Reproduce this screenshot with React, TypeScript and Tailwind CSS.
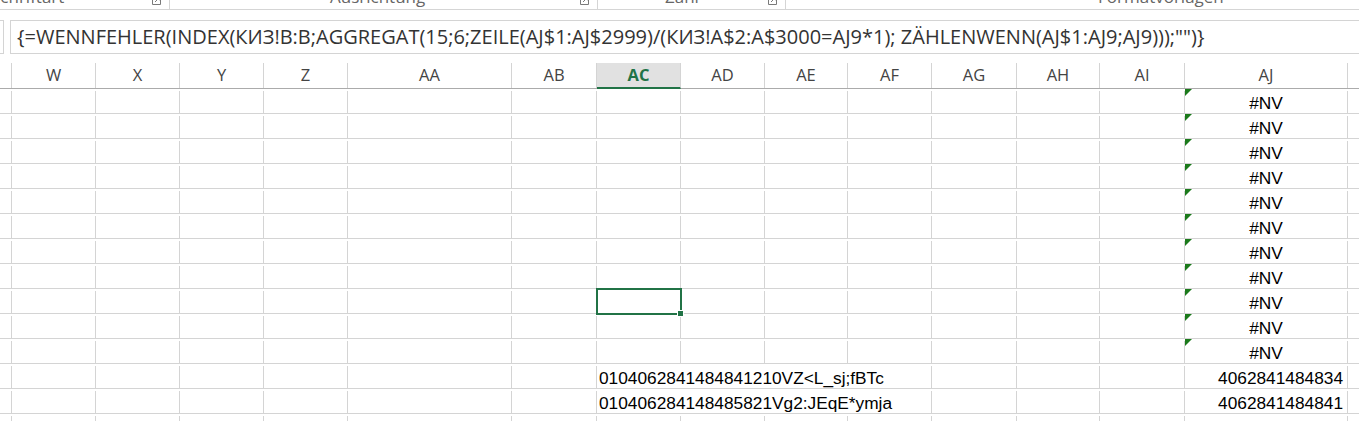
import React from 'react';

const cols = [
  { name: 'W', w: 'w-[84px]' },
  { name: 'X', w: 'w-[84px]' },
  { name: 'Y', w: 'w-[84px]' },
  { name: 'Z', w: 'w-[84px]' },
  { name: 'AA', w: 'w-[164px]' },
  { name: 'AB', w: 'w-[85px]' },
  { name: 'AC', w: 'w-[84px]' },
  { name: 'AD', w: 'w-[84px]' },
  { name: 'AE', w: 'w-[83px]' },
  { name: 'AF', w: 'w-[84px]' },
  { name: 'AG', w: 'w-[85px]' },
  { name: 'AH', w: 'w-[83px]' },
  { name: 'AI', w: 'w-[85px]' },
  { name: 'AJ', w: 'w-[163px]' },
];

const formula =
  '{=WENNFEHLER(INDEX(КИЗ!B:B;AGGREGAT(15;6;ZEILE(AJ$1:AJ$2999)/(КИЗ!A$2:A$3000=AJ9*1); ZÄHLENWENN(AJ$1:AJ9;AJ9)));"")}';

// 11 Zeilen mit #NV, danach 2 Zeilen mit Daten, eine angeschnittene
const rows: { ac?: string; aj?: string; err?: boolean }[] = [
  ...Array.from({ length: 11 }, () => ({ aj: '#NV', err: true })),
  { ac: '0104062841484841210VZ<L_sj;fBTc', aj: '4062841484834' },
  { ac: '010406284148485821Vg2:JEqE*ymja', aj: '4062841484841' },
  {},
];

function Launcher() {
  return (
    <svg width="9" height="9" viewBox="0 0 9 9" className="-mt-[4px]">
      <path d="M0.5 0.5 V8.5 H8.5 V4" fill="none" stroke="#7a7a7a" strokeWidth="1" />
      <path d="M3 6 L8 1 M4.5 1 H8 V4.5" fill="none" stroke="#7a7a7a" strokeWidth="1" />
    </svg>
  );
}

function Ribbon() {
  const label = "text-[17px] text-[#666] leading-[20px] -mt-[13px] whitespace-nowrap font-['Open_Sans',sans-serif]";
  return (
    <div className="h-[10px] border-b border-[#d5d5d5] flex overflow-hidden">
      <div className="w-[170px] shrink-0 border-r border-[#d5d5d5] flex items-start justify-between pr-[8px]">
        <span className={label + ' -ml-[9px]'}>Schriftart</span>
        <Launcher />
      </div>
      <div className="w-[428px] shrink-0 border-r border-[#d5d5d5] flex items-start justify-between pl-[160px] pr-[8px]">
        <span className={label}>Ausrichtung</span>
        <Launcher />
      </div>
      <div className="w-[188px] shrink-0 border-r border-[#d5d5d5] flex items-start justify-between pl-[67px] pr-[8px]">
        <span className={label}>Zahl</span>
        <Launcher />
      </div>
      <div className="flex-1 flex items-start pl-[312px]">
        <span className={label}>Formatvorlagen</span>
      </div>
    </div>
  );
}

function FormulaBar() {
  return (
    <div className="mt-[10px] h-[34px] flex">
      <div className="w-[4px] border border-l-0 border-[#d4d4d4]" />
      <div className="ml-[6px] flex-1 border border-r-0 border-[#d4d4d4] flex items-center pl-[6px]">
        <span className="text-[20px] text-[#333] whitespace-nowrap font-['Open_Sans',sans-serif]">{formula}</span>
      </div>
    </div>
  );
}

function Header() {
  return (
    <div className="mt-[9px] h-[26px] flex border-b border-[#ababab] font-['Open_Sans',sans-serif] text-[16.5px]">
      <div className="w-[12px] shrink-0 border-r border-[#d4d4d4]" />
      {cols.map((c) =>
        c.name === 'AC' ? (
          <div
            key={c.name}
            className={`${c.w} shrink-0 border-r border-[#d4d4d4] bg-[#e1e1e1] border-b-2 border-b-[#217346] -mb-px flex items-center justify-center font-bold text-[#217346]`}
          >
            {c.name}
          </div>
        ) : (
          <div key={c.name} className={`${c.w} shrink-0 border-r border-[#d4d4d4] flex items-center justify-center text-[#444]`}>
            {c.name}
          </div>
        )
      )}
      <div className="flex-1" />
    </div>
  );
}

function Row({ ac, aj, err, selected }: { ac?: string; aj?: string; err?: boolean; selected?: boolean }) {
  const cell = 'shrink-0 border-r border-[#d4d4d4] h-full';
  return (
    <div className="h-[25px] flex border-b border-[#d4d4d4] text-[17.3px] text-black font-['Liberation_Sans',Arial,sans-serif] leading-[24px] pt-[2px]">
      <div className={`w-[12px] ${cell}`} />
      {cols.slice(0, 6).map((c) => (
        <div key={c.name} className={`${c.w} ${cell}`} />
      ))}
      {ac ? (
        <div className={`w-[335px] ${cell} pl-[2px] whitespace-nowrap overflow-hidden`}>{ac}</div>
      ) : (
        <>
          <div className={`w-[84px] ${cell} relative`}>
            {selected && (
              <div className="absolute -left-px -top-[3px] w-[86px] h-[27px] border-2 border-[#217346] z-10">
                <div className="absolute -right-[4px] -bottom-[4px] w-[7px] h-[7px] bg-[#217346] border border-white" />
              </div>
            )}
          </div>
          <div className={`w-[84px] ${cell}`} />
          <div className={`w-[83px] ${cell}`} />
          <div className={`w-[84px] ${cell}`} />
        </>
      )}
      <div className={`w-[85px] ${cell}`} />
      <div className={`w-[83px] ${cell}`} />
      <div className={`w-[85px] ${cell}`} />
      <div className={`w-[163px] ${cell} relative ${err ? 'text-center' : 'text-right pr-[4px]'}`}>
        {err && (
          <svg width="7" height="7" viewBox="0 0 7 7" className="absolute left-0 -top-[2px]">
            <path d="M0 0 H7 L0 7 Z" fill="#1b7a1b" />
          </svg>
        )}
        {aj}
      </div>
      <div className="flex-1" />
    </div>
  );
}

export default function App() {
  return (
    <div className="w-[1359px] h-[421px] overflow-hidden bg-white">
      <Ribbon />
      <FormulaBar />
      <Header />
      {rows.map((r, i) => (
        <Row key={i} {...r} selected={i === 8} />
      ))}
    </div>
  );
}
